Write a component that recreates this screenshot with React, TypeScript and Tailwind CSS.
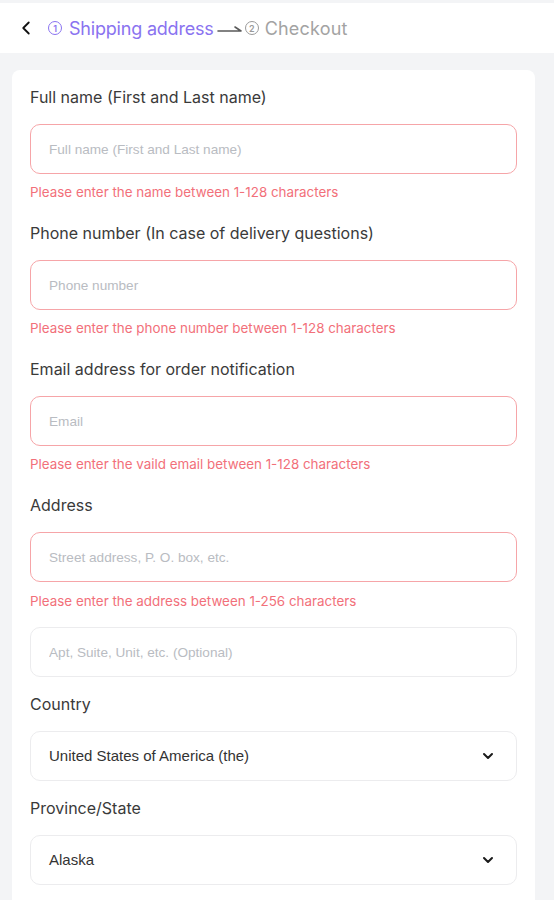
import { ChevronLeft, ChevronDown } from 'lucide-react'

// Formulaire adresse de livraison — étape 1 du checkout

type Field = {
  label: string
  placeholder: string
  error?: string
}

const FIELDS: Field[] = [
  {
    label: 'Full name (First and Last name)',
    placeholder: 'Full name (First and Last name)',
    error: 'Please enter the name between 1-128 characters',
  },
  {
    label: 'Phone number (In case of delivery questions)',
    placeholder: 'Phone number',
    error: 'Please enter the phone number between 1-128 characters',
  },
  {
    label: 'Email address for order notification',
    placeholder: 'Email',
    error: 'Please enter the vaild email between 1-128 characters',
  },
]

function StepDot({ n, active }: { n: number; active?: boolean }) {
  return (
    <span
      className={`inline-flex items-center justify-center w-[14px] h-[14px] rounded-full border-[1.3px] text-[9px] leading-none font-semibold ${
        active ? 'border-[#8a73f0] text-[#8a73f0]' : 'border-[#9a9a9a] text-[#9a9a9a]'
      }`}
    >
      {n}
    </span>
  )
}

function TextInput({ placeholder, invalid }: { placeholder: string; invalid?: boolean }) {
  return (
    <input
      type="text"
      placeholder={placeholder}
      className={`block w-full h-[50px] rounded-[10px] border bg-white px-[18px] text-[13.6px] outline-none placeholder:text-[#b9bcc2] ${
        invalid ? 'border-[#f6a5a8]' : 'border-[#ececee]'
      }`}
      style={{ fontFamily: '"Liberation Sans", Arial, sans-serif' }}
    />
  )
}

function SelectBox({ value }: { value: string }) {
  return (
    <div
      className="flex items-center justify-between w-full h-[50px] rounded-[10px] border border-[#ececee] bg-white pl-[18px] pr-[20px] text-[15px] text-[#333]"
      style={{ fontFamily: '"Liberation Sans", Arial, sans-serif' }}
    >
      <span>{value}</span>
      <ChevronDown className="w-[16px] h-[16px] text-[#1a1a1a]" strokeWidth={3} />
    </div>
  )
}

function Label({ children }: { children: React.ReactNode }) {
  return <p className="text-[16px] leading-[22px] text-[#3a3a3a] mb-[16px]">{children}</p>
}

function ErrorText({ children, className = 'mt-[10px]' }: { children: React.ReactNode; className?: string }) {
  return <p className={`${className} text-[13.4px] leading-[16px] text-[#f2707a]`}>{children}</p>
}

export default function App() {
  return (
    <div className="min-h-[900px] bg-[#f3f4f6] pt-[3px]" style={{ fontFamily: 'Inter, "Noto Sans", sans-serif' }}>
      {/* Header */}
      <header className="h-[50px] bg-white flex items-center pl-[15px]">
        <ChevronLeft className="w-[22px] h-[22px] text-[#111]" strokeWidth={2} />
        <div className="ml-[11px] flex items-center text-[18px] tracking-[-0.2px]">
          <span className="flex items-center gap-[7px] text-[#8a73f0]">
            <StepDot n={1} active />
            Shipping address
          </span>
          <svg className="ml-[3px] mr-[2px]" width="26" height="14" viewBox="0 0 26 14" fill="none">
            <path d="M1 10H24L18 6" stroke="#5a5a5a" strokeWidth="1.6" strokeLinecap="round" strokeLinejoin="round" />
          </svg>
          <span className="flex items-center gap-[6px] text-[#a3a3a3]">
            <StepDot n={2} />
            <span className="tracking-[0.2px]">Checkout</span>
          </span>
        </div>
      </header>

      {/* Formulaire */}
      <main className="pt-[17px]">
        <div className="ml-[12px] w-[523px] bg-white rounded-[8px] px-[18px] pt-[16px] pb-[24px]">
          {FIELDS.map((f) => (
            <div key={f.label} className="mb-[22px]">
              <Label>{f.label}</Label>
              <TextInput placeholder={f.placeholder} invalid />
              {f.error && <ErrorText>{f.error}</ErrorText>}
            </div>
          ))}

          {/* Adresse */}
          <div>
            <Label>Address</Label>
            <TextInput placeholder="Street address, P. O. box, etc." invalid />
            <ErrorText className="mt-[11px]">Please enter the address between 1-256 characters</ErrorText>
            <div className="mt-[18px]">
              <TextInput placeholder="Apt, Suite, Unit, etc. (Optional)" />
            </div>
          </div>

          <div className="mt-[16px]">
            <Label>Country</Label>
            <SelectBox value="United States of America (the)" />
          </div>

          <div className="mt-[16px]">
            <Label>Province/State</Label>
            <SelectBox value="Alaska" />
          </div>
        </div>
      </main>
    </div>
  )
}
